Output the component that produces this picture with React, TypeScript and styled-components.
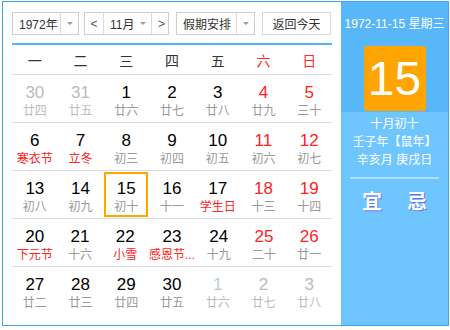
import { FC } from 'react';
import styled, { createGlobalStyle } from 'styled-components';

type IDay = {
  day: number;
  lunar: string;
  other?: boolean;
  festival?: boolean;
  tint?: boolean;
};

const WEEK = ['一', '二', '三', '四', '五', '六', '日'];

const WEEKS: IDay[][] = [
  [
    { day: 30, lunar: '廿四', other: true },
    { day: 31, lunar: '廿五', other: true },
    { day: 1, lunar: '廿六' },
    { day: 2, lunar: '廿七' },
    { day: 3, lunar: '廿八' },
    { day: 4, lunar: '廿九' },
    { day: 5, lunar: '三十' },
  ],
  [
    { day: 6, lunar: '寒衣节', festival: true },
    { day: 7, lunar: '立冬', festival: true },
    { day: 8, lunar: '初三' },
    { day: 9, lunar: '初四' },
    { day: 10, lunar: '初五' },
    { day: 11, lunar: '初六' },
    { day: 12, lunar: '初七' },
  ],
  [
    { day: 13, lunar: '初八' },
    { day: 14, lunar: '初九' },
    { day: 15, lunar: '初十' },
    { day: 16, lunar: '十一' },
    { day: 17, lunar: '学生日', festival: true },
    { day: 18, lunar: '十三' },
    { day: 19, lunar: '十四' },
  ],
  [
    { day: 20, lunar: '下元节', festival: true },
    { day: 21, lunar: '十六' },
    { day: 22, lunar: '小雪', festival: true },
    { day: 23, lunar: '感恩节...', festival: true },
    { day: 24, lunar: '十九' },
    { day: 25, lunar: '二十' },
    { day: 26, lunar: '廿一' },
  ],
  [
    { day: 27, lunar: '廿二' },
    { day: 28, lunar: '廿三' },
    { day: 29, lunar: '廿四' },
    { day: 30, lunar: '廿五' },
    { day: 1, lunar: '廿六', other: true, tint: true },
    { day: 2, lunar: '廿七', other: true },
    { day: 3, lunar: '廿八', other: true },
  ],
];

const SELECTED = 15;

const App = () => {
  return (
    <>
      <GlobalStyle />
      <Widget>
        <Main>
          <Toolbar>
            <Select $width={67}>
              <SelectText>1972年</SelectText>
              <Arrow $divider />
            </Select>
            <Group>
              <Step>&lt;</Step>
              <MonthSelect>
                <SelectText>11月</SelectText>
                <Arrow />
              </MonthSelect>
              <Step $right>&gt;</Step>
            </Group>
            <Select $width={79}>
              <SelectText>假期安排</SelectText>
              <Arrow $divider />
            </Select>
            <TodayButton>返回今天</TodayButton>
          </Toolbar>
          <Header>
            {WEEK.map((w, i) => (
              <HeadCell key={w} $weekend={i > 4}>
                {w}
              </HeadCell>
            ))}
          </Header>
          {WEEKS.map((week, r) => (
            <Week key={r} $last={r === WEEKS.length - 1}>
              {week.map((d, i) => (
                <DayCell key={i} day={d} weekend={i > 4} />
              ))}
            </Week>
          ))}
        </Main>
        <Side>
          <SideTop>
            <FullDate>1972-11-15 星期三</FullDate>
            <BigDay>15</BigDay>
          </SideTop>
          <SideBottom>
            <LunarLine>十月初十</LunarLine>
            <LunarLine>壬子年【鼠年】</LunarLine>
            <LunarLine>辛亥月 庚戌日</LunarLine>
            <Divider />
            <Omens>
              <Omen>宜</Omen>
              <Omen>忌</Omen>
            </Omens>
          </SideBottom>
        </Side>
      </Widget>
    </>
  );
};

export default App;

const DayCell: FC<{ day: IDay; weekend: boolean }> = ({ day, weekend }) => {
  const tone = day.tint
    ? 'tint'
    : day.other
    ? 'other'
    : weekend
    ? 'weekend'
    : 'normal';

  return (
    <Cell>
      <CellBox $selected={!day.other && day.day === SELECTED}>
        <DayNum $tone={tone}>{day.day}</DayNum>
        <Lunar $festival={!!day.festival} $other={!!day.other}>
          {day.lunar}
        </Lunar>
      </CellBox>
    </Cell>
  );
};

/* Styles */

const CJK = `"Liberation Sans", "Noto Sans CJK SC", sans-serif`;

const GlobalStyle = createGlobalStyle`
  body {
    margin: 0;
    background: #fff;
    font-family: ${CJK};
  }
`;

const Widget = styled.div`
  display: flex;
  width: 445px;
  height: 323px;
  margin: 1px 0 0 2px;
  border: 1px solid #3ea6f0;
`;

const Main = styled.div`
  width: 320px;
  padding: 10px 9px 0 9px;
  background: #fff;
`;

const Toolbar = styled.div`
  display: flex;
  align-items: center;
  gap: 5px;
  height: 23px;
  padding-bottom: 8px;
  border-bottom: 2px solid #56b3f5;
`;

const Select = styled.div<{ $width: number }>`
  display: flex;
  flex: 0 0 auto;
  box-sizing: border-box;
  width: ${(p) => p.$width}px;
  height: 23px;
  margin-right: 2px;
  border: 1px solid #cfcfcf;
  background: #fff;

  &:first-child {
    margin-right: 0;
  }
`;

const SelectText = styled.div`
  flex: 1;
  display: flex;
  align-items: center;
  padding-left: 6px;
  font-size: 12px;
  color: #333;
  white-space: nowrap;
`;

const Arrow = styled.div<{ $divider?: boolean }>`
  position: relative;
  flex: 0 0 17px;
  border-left: ${(p) => (p.$divider ? '1px solid #dcdcdc' : 'none')};

  &::after {
    content: '';
    position: absolute;
    left: 6px;
    top: 9px;
    border-left: 3px solid transparent;
    border-right: 3px solid transparent;
    border-top: 3px solid #999;
  }
`;

const Group = styled.div`
  display: flex;
  flex: 0 0 auto;
  box-sizing: border-box;
  width: 85px;
  height: 23px;
  margin-right: 2px;
  border: 1px solid #cfcfcf;
`;

const Step = styled.div<{ $right?: boolean }>`
  display: flex;
  align-items: center;
  justify-content: center;
  flex: 0 0 18px;
  font-size: 12px;
  color: #555;
  ${(p) => (p.$right ? 'border-left' : 'border-right')}: 1px solid #dcdcdc;
`;

const MonthSelect = styled.div`
  display: flex;
  flex: 1;
`;

const TodayButton = styled.div`
  display: flex;
  align-items: center;
  justify-content: center;
  flex: 0 0 auto;
  box-sizing: border-box;
  width: 69px;
  height: 23px;
  border: 1px solid #d8d8d8;
  font-size: 12px;
  color: #333;
  background: #fff;
  white-space: nowrap;
`;

const Header = styled.div`
  display: grid;
  grid-template-columns: repeat(7, 1fr);
  height: 29px;
  border-bottom: 1px solid #dcdcdc;
`;

const HeadCell = styled.div<{ $weekend: boolean }>`
  display: flex;
  align-items: center;
  justify-content: center;
  font-size: 14px;
  color: ${(p) => (p.$weekend ? '#ff2b2b' : '#333')};
`;

const Week = styled.div<{ $last: boolean }>`
  display: grid;
  grid-template-columns: repeat(7, 1fr);
  height: 47px;
  border-bottom: 1px solid ${(p) => (p.$last ? 'transparent' : '#dcdcdc')};
`;

const Cell = styled.div`
  padding: 1px;
`;

const CellBox = styled.div<{ $selected: boolean }>`
  display: flex;
  flex-direction: column;
  align-items: center;
  height: 100%;
  box-sizing: border-box;
  padding-top: ${(p) => (p.$selected ? '6px' : '8px')};
  border: ${(p) => (p.$selected ? '2px solid #ffa500' : 'none')};
`;

const toneColor = {
  normal: '#000',
  weekend: '#ff2323',
  other: '#bbb',
  tint: '#b3c9dd',
};

const DayNum = styled.div<{ $tone: keyof typeof toneColor }>`
  font-family: "Liberation Sans", Arial, sans-serif;
  font-size: 17px;
  line-height: 18px;
  color: ${(p) => toneColor[p.$tone]};
`;

const Lunar = styled.div<{ $festival: boolean; $other: boolean }>`
  margin-top: 1px;
  font-size: 12px;
  line-height: 16px;
  white-space: nowrap;
  color: ${(p) => (p.$festival ? '#ff2323' : p.$other ? '#bbb' : '#999')};
`;

const Side = styled.div`
  display: flex;
  flex-direction: column;
  width: 107px;
  background: #6fc6ff;
`;

const SideTop = styled.div`
  display: flex;
  flex-direction: column;
  align-items: center;
  height: 96px;
  padding-top: 14px;
  background: #58b7f8;
`;

const FullDate = styled.div`
  font-size: 12px;
  line-height: 16px;
  color: #fff;
  white-space: nowrap;
`;

const BigDay = styled.div`
  display: flex;
  align-items: center;
  justify-content: center;
  width: 62px;
  height: 65px;
  margin-top: 14px;
  border-radius: 3px;
  background: #ffa400;
  font-family: "Liberation Sans", Arial, sans-serif;
  font-size: 48px;
  font-weight: 300;
  color: #fff;
`;

const SideBottom = styled.div`
  display: flex;
  flex-direction: column;
  align-items: center;
  padding-top: 3px;
`;

const LunarLine = styled.div`
  font-size: 12px;
  line-height: 18px;
  color: #fff;
  white-space: nowrap;
`;

const Divider = styled.div`
  align-self: stretch;
  height: 2px;
  margin: 8px 9px 0;
  background: rgba(255, 255, 255, 0.45);
`;

const Omens = styled.div`
  display: flex;
  gap: 25px;
  margin-top: 11px;
`;

const Omen = styled.div`
  font-size: 20px;
  line-height: 24px;
  font-weight: bold;
  color: #fff;
  text-shadow: 1px 1px 0 #6a6af2;
`;
